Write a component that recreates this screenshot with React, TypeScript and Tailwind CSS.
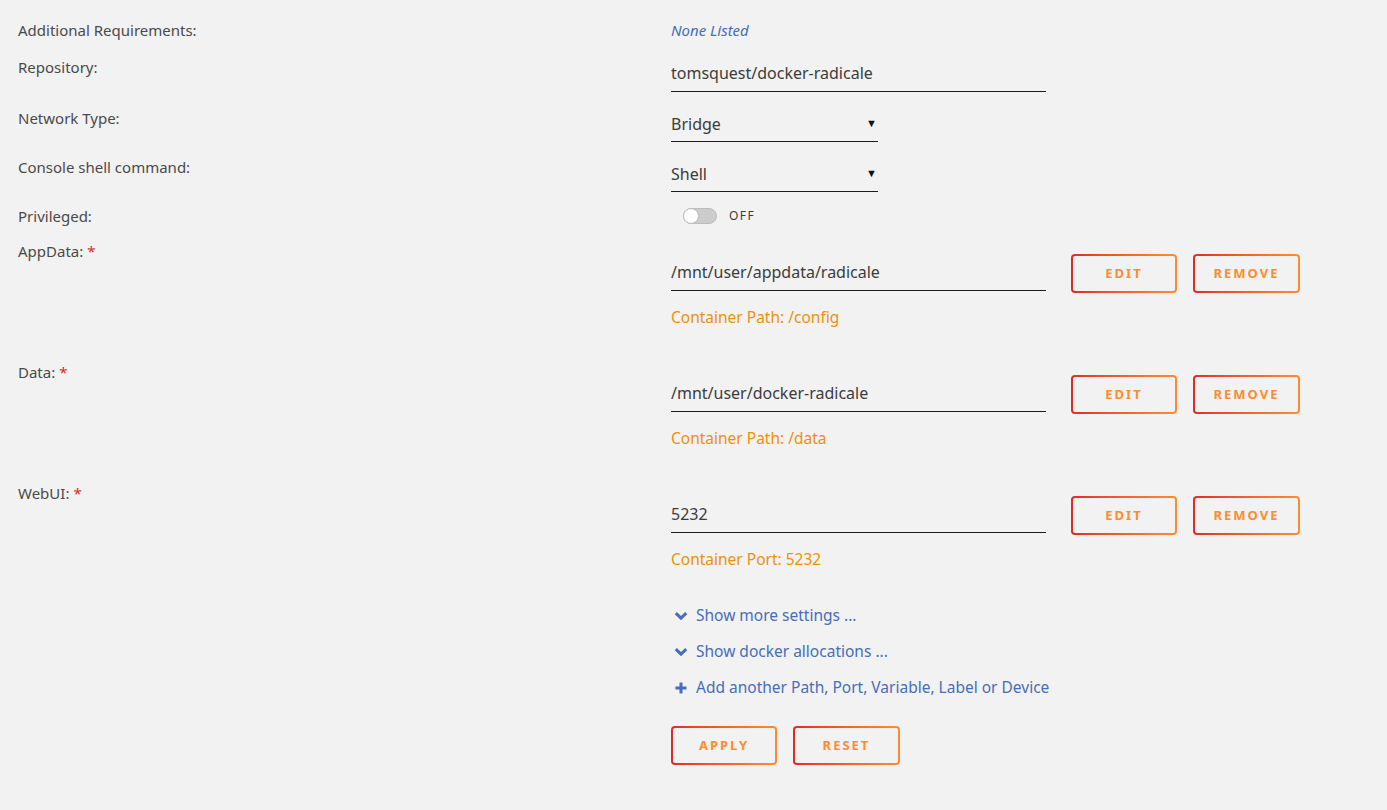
const font = { fontFamily: '"Noto Sans", "Open Sans", sans-serif' };

function GradientButton({ label, wide }: { label: string; wide?: boolean }) {
  return (
    <div
      className={`rounded-[4px] bg-gradient-to-r from-[#e22828] to-[#ff8c2f] p-[2px] ${
        wide ? 'w-[107px]' : 'w-[106px]'
      } h-[39px]`}
    >
      <div className="flex h-full w-full items-center justify-center rounded-[2px] bg-[#f2f2f2] text-[13px] font-bold tracking-[2px] text-[#ff8c2f]">
        {label}
      </div>
    </div>
  );
}

function TextValue({ value, width }: { value: string; width: string }) {
  return (
    <div className={`flex h-[37px] items-center border-b border-[#1c1c1c] text-[16px] text-[#3c3c3c] ${width}`}>
      {value}
    </div>
  );
}

function SelectValue({ value }: { value: string }) {
  return (
    <div className="flex h-[36px] w-[207px] items-center justify-between border-b border-[#1c1c1c] text-[16px] text-[#3c3c3c]">
      <span>{value}</span>
      <span className="pr-[1px] text-[11px] text-[#111]">▼</span>
    </div>
  );
}

function Label({ text, required }: { text: string; required?: boolean }) {
  return (
    <div className="w-[653px] shrink-0 text-[15px] leading-[20px] text-[#4a4a4a]">
      {text}
      {required && <span className="ml-[4px] text-[#e22828]">*</span>}
    </div>
  );
}

function ConfigBlock({
  label,
  value,
  note,
}: {
  label: string;
  value: string;
  note: string;
}) {
  return (
    <div className="flex h-[121px] items-start">
      <Label text={label} required />
      <div className="mt-[13px] flex flex-col">
        <div className="flex items-start gap-[25px]">
          <TextValue value={value} width="w-[375px]" />
          <div className="flex gap-[16px]">
            <GradientButton label="EDIT" />
            <GradientButton label="REMOVE" wide />
          </div>
        </div>
        <div className="mt-[14px] text-[15.5px] leading-[20px] text-[#f0900a]">{note}</div>
      </div>
    </div>
  );
}

function LinkRow({ text, plus }: { text: string; plus?: boolean }) {
  return (
    <div className="flex h-[20px] items-center gap-[8px] pl-[3px] text-[15.5px] text-[#486dba]">
      {plus ? (
        <svg width="14" height="14" viewBox="0 0 14 14" className="shrink-0">
          <path d="M7 1.5v11M1.5 7h11" stroke="currentColor" strokeWidth="3" />
        </svg>
      ) : (
        <svg width="14" height="14" viewBox="0 0 14 14" className="shrink-0">
          <path d="M1.8 4.2L7 9.2l5.2-5" fill="none" stroke="currentColor" strokeWidth="3" />
        </svg>
      )}
      <span>{text}</span>
    </div>
  );
}

export default function App() {
  return (
    <div className="min-h-[810px] w-full bg-[#f2f2f2] pl-[18px] pt-[20px]" style={font}>
      <div className="flex h-[20px] items-center">
        <Label text="Additional Requirements:" />
        <div className="text-[15px] italic text-[#486dba]">None Listed</div>
      </div>

      <div className="mt-[15px] flex items-start">
        <div className="mt-[2px]">
          <Label text="Repository:" />
        </div>
        <TextValue value="tomsquest/docker-radicale" width="w-[375px]" />
      </div>

      <div className="mt-[14px] flex items-start">
        <div className="mt-[2px]">
          <Label text="Network Type:" />
        </div>
        <SelectValue value="Bridge" />
      </div>

      <div className="mt-[14px] flex items-start">
        <div className="mt-[1px]">
          <Label text="Console shell command:" />
        </div>
        <SelectValue value="Shell" />
      </div>

      <div className="mt-[14px] flex items-center">
        <Label text="Privileged:" />
        <div className="flex items-center gap-[12px] pl-[12px]">
          <div className="relative h-[16px] w-[34px] rounded-full border border-[#bdbdbd] bg-[#cccccc]">
            <div className="absolute left-[-1px] top-[-1px] h-[16px] w-[16px] rounded-full border border-[#bdbdbd] bg-white" />
          </div>
          <span className="text-[12px] tracking-[1.5px] text-[#3c3c3c]">OFF</span>
        </div>
      </div>

      <div className="mt-[15px]">
        <ConfigBlock label="AppData:" value="/mnt/user/appdata/radicale" note="Container Path: /config" />
        <ConfigBlock label="Data:" value="/mnt/user/docker-radicale" note="Container Path: /data" />
        <ConfigBlock label="WebUI:" value="5232" note="Container Port: 5232" />
      </div>

      <div className="ml-[653px] mt-[2px] flex flex-col gap-[16px]">
        <LinkRow text="Show more settings ..." />
        <LinkRow text="Show docker allocations ..." />
        <LinkRow text="Add another Path, Port, Variable, Label or Device" plus />
      </div>

      <div className="ml-[653px] mt-[28px] flex gap-[16px]">
        <GradientButton label="APPLY" />
        <GradientButton label="RESET" wide />
      </div>
    </div>
  );
}
